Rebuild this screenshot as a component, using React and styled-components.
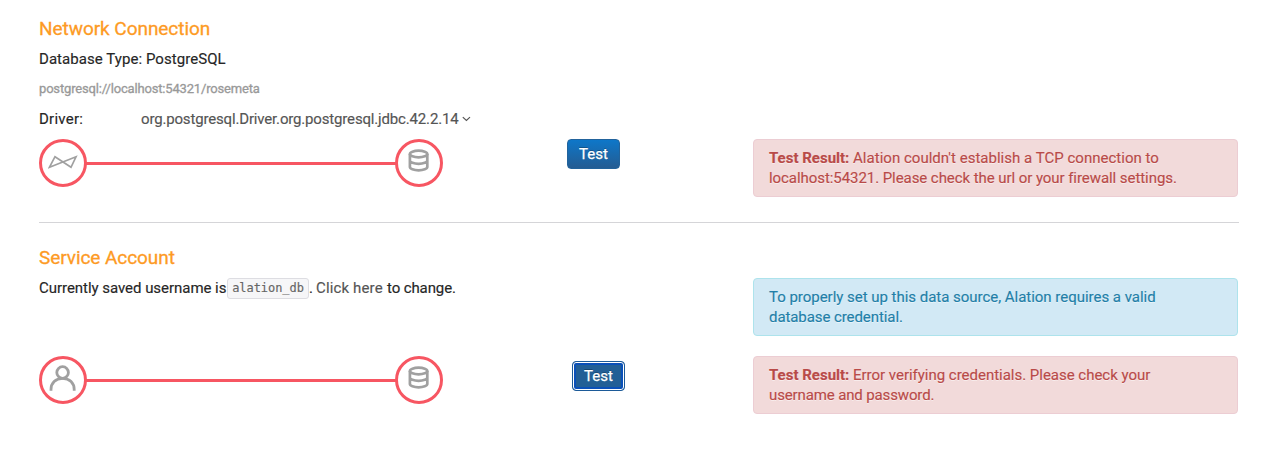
import React from 'react';
import styled, { createGlobalStyle, css } from 'styled-components';

const GlobalStyle = createGlobalStyle`
  * { box-sizing: border-box; }
  body {
    margin: 0;
    background: #fff;
    color: #262626;
    font: 15px/20px Roboto, "Liberation Sans", sans-serif;
    -webkit-text-stroke: 0.15px currentColor;
  }
`;

const Page = styled.main`
  width: 1270px;
  height: 450px;
  padding: 9px 32px 0 39px;
  overflow: hidden;
`;

const Section = styled.section`
  & + & {
    margin-top: 25px;
    padding-top: 15px;
    border-top: 1px solid #d5d5d8;
    width: 1200px;
  }
`;

const Title = styled.h2`
  margin: 0;
  font-size: 19px;
  font-weight: 400;
  line-height: 40px;
  color: #fd9a24;
  -webkit-text-stroke: 0.3px currentColor;
`;

const Run = styled.span`
  letter-spacing: ${(p) => p.$track || 0}px;
  white-space: nowrap;
`;

const Line = styled.p`
  display: flex;
  align-items: center;
  margin: 0 0 10px;
  height: 20px;
`;

const Url = styled(Line)`
  font-size: 13px;
  color: #999;
  -webkit-text-stroke: 0.3px currentColor;
`;

const DriverLabel = styled.span`
  width: 102px;
`;

const DriverSelect = styled.span`
  display: flex;
  align-items: center;
  gap: 4px;
  color: #555;
`;

const Row = styled.div`
  display: grid;
  grid-template-columns: 528px 186px 485px;
  align-items: start;
  & + & { margin-top: 20px; }
`;

const Link = styled.div`
  display: flex;
  align-items: center;
  width: 404px;
`;

const Node = styled.div`
  display: flex;
  align-items: center;
  justify-content: center;
  flex: none;
  width: 48px;
  height: 48px;
  border: 3px solid #f75662;
  border-radius: 50%;
  color: #a0a0a0;
  svg { display: block; }
`;

const Wire = styled.div`
  flex: 1;
  height: 3px;
  margin: 1px -1px 0;
  background: #f75662;
`;

const TestButton = styled.button`
  width: 53px;
  height: 30px;
  padding: 0;
  border: 1px solid #22639c;
  border-radius: 4px;
  background: linear-gradient(#0e77c9, #245c92);
  color: #fff;
  font: inherit;
  -webkit-text-stroke: 0.25px currentColor;
  text-shadow: 0 -1px 0 rgba(0, 0, 0, 0.25);
  ${(p) => p.$focused && css`
    margin: 5px 0 0 5px;
    border: 1px solid #1c5a98;
    background: #225f96;
    box-shadow: inset 0 0 0 1px #fff, inset 0 0 0 3px #0a50b8;
  `}
`;

const tones = {
  error: css`
    color: #b94a48;
    background: #f2dada;
    border-color: #eccdd3;
  `,
  info: css`
    color: #227fa8;
    background: #d2e9f5;
    border-color: #ade3ec;
  `,
};

const Alert = styled.div`
  height: 58px;
  padding: 8px 15px;
  border: 1px solid;
  border-radius: 4px;
  text-shadow: 0 1px 0 rgba(255, 255, 255, 0.5);
  ${(p) => tones[p.$tone]}
`;

const AlertLine = styled.div`
  height: 20px;
`;

const Code = styled.code`
  width: 82px;
  height: 21px;
  margin-top: 1px;
  border: 1px solid #dddde2;
  border-radius: 3px;
  background: #f6f6f8;
  color: #666;
  font: 12px/19px "DejaVu Sans Mono", monospace;
  letter-spacing: -0.05px;
  text-align: center;
`;

const Account = styled(Line)`
  margin: 0;
`;

const Saved = styled.span`
  width: 188px;
`;

const ClickHere = styled.a`
  width: 71px;
  margin-left: 3px;
  color: #555;
`;

const DatabaseIcon = () => (
  <svg width="22" height="24" viewBox="0 0 22 24" fill="none" stroke="currentColor" strokeWidth="2.7">
    <ellipse cx="10.6" cy="5" rx="8.7" ry="3.3" />
    <path d="M1.9 5v13c0 1.8 3.9 3.3 8.7 3.3s8.7-1.5 8.7-3.3V5M1.9 11.5c0 1.8 3.9 3.3 8.7 3.3s8.7-1.5 8.7-3.3" />
  </svg>
);

const BowtieIcon = () => (
  <svg width="30" height="14" viewBox="0 0 30 14" fill="none" stroke="currentColor" strokeWidth="1.7" strokeLinejoin="miter">
    <path d="M1.5 12.2 7 1.7 23 12.3 28 1.8Z" />
  </svg>
);

const PersonIcon = () => (
  <svg width="28" height="28" viewBox="0 0 28 28" fill="none" stroke="currentColor" strokeWidth="2.8">
    <circle cx="13.6" cy="8.5" r="5.8" />
    <path d="M2 26.8v-1.3c0-6.4 4.5-11.2 11.6-11.2s11.6 4.8 11.6 11.2v1.3" />
  </svg>
);

const Chevron = () => (
  <svg width="9" height="6" viewBox="0 0 9 6" fill="none" stroke="currentColor" strokeWidth="1.2">
    <path d="m.8 1.1 3.6 3.4L8 1.1" />
  </svg>
);

const IconShift = styled.span`
  margin-top: ${(p) => p.$lift}px;
`;

const Connection = ({ children, lift }) => (
  <Link>
    <Node><IconShift $lift={lift}>{children}</IconShift></Node>
    <Wire />
    <Node><IconShift $lift={-4}><DatabaseIcon /></IconShift></Node>
  </Link>
);

export default function App() {
  return (
    <>
      <GlobalStyle />
      <Page>
        <Section>
          <Title><Run $track={-0.05}>Network Connection</Run></Title>
          <Line><Run $track={0.06}>Database Type: PostgreSQL</Run></Line>
          <Url><Run $track={-0.17}>postgresql://localhost:54321/rosemeta</Run></Url>
          <Line>
            <DriverLabel><Run $track={0.25}>Driver:</Run></DriverLabel>
            <DriverSelect>
              <Run $track={-0.165}>org.postgresql.Driver.org.postgresql.jdbc.42.2.14</Run>
              <Chevron />
            </DriverSelect>
          </Line>
          <Row>
            <Connection lift={-2}><BowtieIcon /></Connection>
            <TestButton><Run $track={0.05}>Test</Run></TestButton>
            <Alert $tone="error">
              <AlertLine><Run><b>Test Result:</b></Run><Run $track={0.02}> Alation couldn't establish a TCP connection to</Run></AlertLine>
              <AlertLine><Run $track={-0.065}>localhost:54321. Please check the url or your firewall settings.</Run></AlertLine>
            </Alert>
          </Row>
        </Section>
        <Section>
          <Title><Run $track={-0.07}>Service Account</Run></Title>
          <Row>
            <Account>
              <Saved><Run $track={-0.04}>Currently saved username is</Run></Saved>
              <Code>alation_db</Code>
              <Run>.</Run>
              <ClickHere><Run $track={0.15}>Click here</Run></ClickHere>
              <Run $track={-0.1}>to change.</Run>
            </Account>
            <span />
            <Alert $tone="info">
              <AlertLine><Run $track={-0.025}>To properly set up this data source, Alation requires a valid</Run></AlertLine>
              <AlertLine><Run $track={-0.08}>database credential.</Run></AlertLine>
            </Alert>
          </Row>
          <Row>
            <Connection lift={-5}><PersonIcon /></Connection>
            <TestButton $focused><Run $track={0.05}>Test</Run></TestButton>
            <Alert $tone="error">
              <AlertLine><Run><b>Test Result:</b></Run><Run $track={-0.02}> Error verifying credentials. Please check your</Run></AlertLine>
              <AlertLine><Run $track={-0.13}>username and password.</Run></AlertLine>
            </Alert>
          </Row>
        </Section>
      </Page>
    </>
  );
}
